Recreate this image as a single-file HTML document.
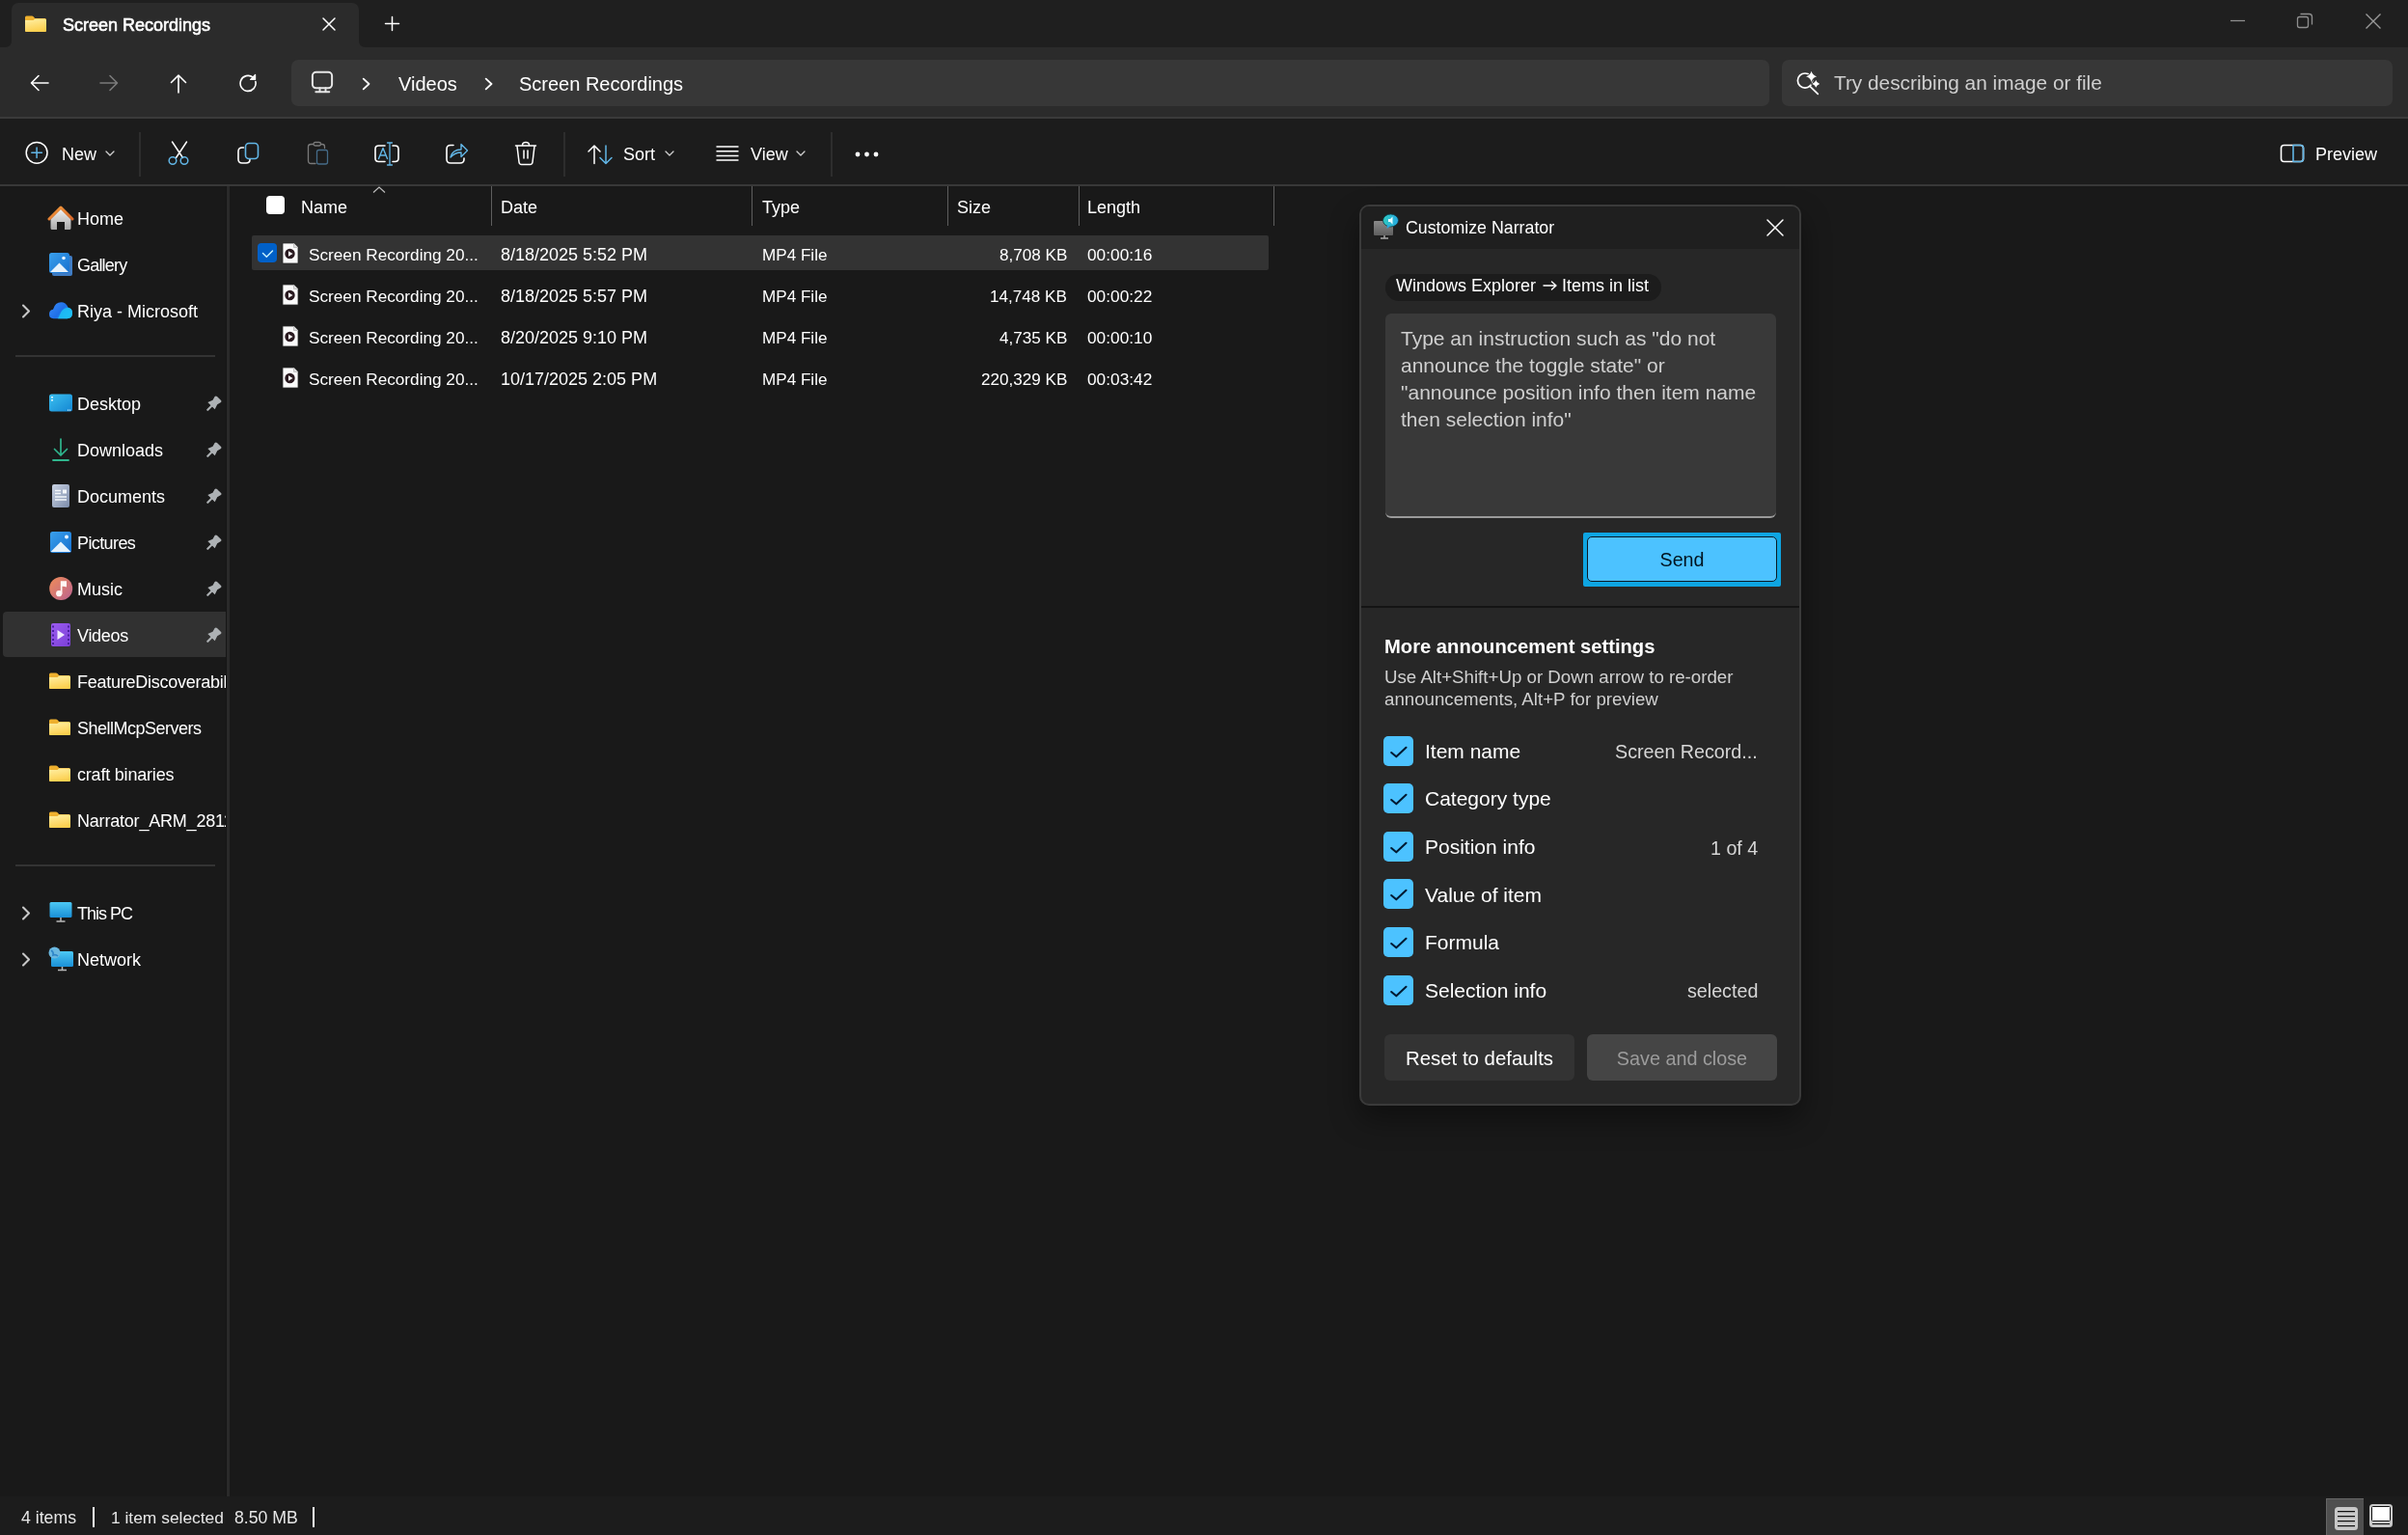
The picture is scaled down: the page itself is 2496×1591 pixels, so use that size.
<!DOCTYPE html>
<html><head><meta charset="utf-8"><title>Screen Recordings - File Explorer</title>
<style>
html,body{margin:0;padding:0;width:2496px;height:1591px;overflow:hidden;background:#191919;}
body{position:relative;font-family:"Liberation Sans",sans-serif;}
.a{position:absolute;display:block;}
.t{position:absolute;white-space:pre;line-height:1;will-change:transform;}
</style></head><body>

<div class="a" style="left:0px;top:0px;width:2496px;height:49px;background:#1f1f1f;"></div>
<div class="a" style="left:0px;top:49px;width:2496px;height:72px;background:#2b2b2b;"></div>
<div class="a" style="left:12px;top:3px;width:360px;height:47px;background:#2b2b2b;border-radius:7px 7px 0 0;"></div>
<svg class="a" style="left:5px;top:42px;" width="7" height="7" viewBox="0 0 7 7"><path d="M0 7 Q7 7 7 0 L7 7 Z" fill="#2b2b2b"/></svg>
<svg class="a" style="left:372px;top:42px;" width="7" height="7" viewBox="0 0 7 7"><path d="M7 7 Q0 7 0 0 L0 7 Z" fill="#2b2b2b"/></svg>
<svg width="0" height="0" style="position:absolute"><defs><linearGradient id="fg" x1="0" y1="0" x2="0.3" y2="1"><stop offset="0" stop-color="#fff0a6"/><stop offset="1" stop-color="#fcd050"/></linearGradient></defs></svg>
<svg class="a" style="left:25px;top:15px;" width="24" height="20" viewBox="0 0 24 20"><path d="M1 3 Q1 1.5 2.5 1.5 L8 1.5 Q9 1.5 9.7 2.3 L11.2 4 L21.5 4 Q23 4 23 5.5 L23 16.5 Q23 18 21.5 18 L2.5 18 Q1 18 1 16.5 Z" fill="#eeb02e"/>
<path d="M1 6 L9.5 6 L11.3 4.6 L21.5 4.6 Q23 4.6 23 6.1 L23 16.5 Q23 18 21.5 18 L2.5 18 Q1 18 1 16.5 Z" fill="url(#fg)"/></svg>
<div class="t" style="left:65px;top:17.26px;font-size:18px;color:#ffffff;font-weight:400;-webkit-text-stroke:0.6px #ffffff;">Screen Recordings</div>
<svg class="a" style="left:333px;top:17px;" width="16" height="16" viewBox="0 0 16 16"><path d="M2 2 L14 14 M14 2 L2 14" stroke="#ffffff" stroke-width="1.5" stroke-linecap="round"/></svg>
<svg class="a" style="left:398px;top:16px;" width="17" height="17" viewBox="0 0 17 17"><path d="M8.5 1.5 V15.5 M1.5 8.5 H15.5" stroke="#ffffff" stroke-width="1.5" stroke-linecap="round"/></svg>
<svg class="a" style="left:2308px;top:14px;" width="24" height="16" viewBox="0 0 24 16"><path d="M4 7.5 H19" stroke="#8f8f8f" stroke-width="1.3"/></svg>
<svg class="a" style="left:2378px;top:11px;" width="22" height="20" viewBox="0 0 22 20"><rect x="3.5" y="6.5" width="11" height="11" rx="2" fill="none" stroke="#8f8f8f" stroke-width="1.3"/><path d="M6.5 3.5 H15.5 Q18.5 3.5 18.5 6.5 V14.5" fill="none" stroke="#8f8f8f" stroke-width="1.3"/></svg>
<svg class="a" style="left:2449px;top:11px;" width="22" height="22" viewBox="0 0 22 22"><path d="M3.5 3.5 L18.5 18.5 M18.5 3.5 L3.5 18.5" stroke="#9a9a9a" stroke-width="1.4"/></svg>
<svg class="a" style="left:30px;top:75px;" width="22" height="22" viewBox="0 0 22 22"><path d="M3 11 H20 M10 3.5 L2.5 11 L10 18.5" stroke="#ffffff" stroke-width="1.6" fill="none" stroke-linecap="round" stroke-linejoin="round"/></svg>
<svg class="a" style="left:102px;top:75px;" width="22" height="22" viewBox="0 0 22 22"><path d="M2 11 H19 M12 3.5 L19.5 11 L12 18.5" stroke="#7b7b7b" stroke-width="1.6" fill="none" stroke-linecap="round" stroke-linejoin="round"/></svg>
<svg class="a" style="left:174px;top:75px;" width="22" height="22" viewBox="0 0 22 22"><path d="M11 21 V3 M3.5 10.5 L11 3 L18.5 10.5" stroke="#ffffff" stroke-width="1.6" fill="none" stroke-linecap="round" stroke-linejoin="round"/></svg>
<svg class="a" style="left:246px;top:75px;" width="22" height="22" viewBox="0 0 22 22"><path d="M18.9 9.6 A8 8 0 1 1 16.2 5.2" stroke="#ffffff" stroke-width="1.6" fill="none" stroke-linecap="round"/><path d="M13.6 7.3 L18.6 7.3 L18.6 2.3 Z" fill="#ffffff" stroke="#ffffff" stroke-width="1.2" stroke-linejoin="round"/></svg>
<div class="a" style="left:302px;top:62px;width:1532px;height:48px;background:#373737;border-radius:7px;"></div>
<svg class="a" style="left:321px;top:72px;" width="26" height="26" viewBox="0 0 26 26"><rect x="2.9" y="2.8" width="20.2" height="16.5" rx="3.8" fill="none" stroke="#e6e6e6" stroke-width="2"/><path d="M10.5 19.3 V23.3 M16.5 19.3 V23.3 M6.3 23.3 H20.3" stroke="#e6e6e6" stroke-width="1.9" stroke-linecap="round"/></svg>
<svg class="a" style="left:372px;top:77px;" width="14" height="20" viewBox="0 0 14 20"><path d="M4.7 4.7 L10.5 10 L4.7 15.3" stroke="#ffffff" stroke-width="1.8" fill="none" stroke-linecap="round" stroke-linejoin="round"/></svg>
<div class="t" style="left:413px;top:77.07px;font-size:20px;color:#ffffff;font-weight:400;">Videos</div>
<svg class="a" style="left:499px;top:77px;" width="14" height="20" viewBox="0 0 14 20"><path d="M4.7 4.7 L10.5 10 L4.7 15.3" stroke="#ffffff" stroke-width="1.8" fill="none" stroke-linecap="round" stroke-linejoin="round"/></svg>
<div class="t" style="left:538px;top:77.07px;font-size:20px;color:#ffffff;font-weight:400;">Screen Recordings</div>
<div class="a" style="left:1847px;top:62px;width:633px;height:48px;background:#373737;border-radius:7px;"></div>
<svg class="a" style="left:1860px;top:73px;" width="28" height="28" viewBox="0 0 28 28"><circle cx="11" cy="10.6" r="7.6" fill="none" stroke="#ffffff" stroke-width="1.7"/><path d="M16 16.3 L24.3 24.3" stroke="#ffffff" stroke-width="1.7" stroke-linecap="round"/><path d="M17.60 0.70 Q18.83 5.07 23.20 6.30 Q18.83 7.53 17.60 11.90 Q16.37 7.53 12.00 6.30 Q16.37 5.07 17.60 0.70 Z" fill="#ffffff" stroke="#373737" stroke-width="1.6" paint-order="stroke"/><path d="M22.30 10.00 Q23.16 13.04 26.20 13.90 Q23.16 14.76 22.30 17.80 Q21.44 14.76 18.40 13.90 Q21.44 13.04 22.30 10.00 Z" fill="#ffffff" stroke="#373737" stroke-width="1.6" paint-order="stroke"/></svg>
<div class="t" style="left:1901px;top:76.39px;font-size:20.8px;color:#cfcfcf;font-weight:400;">Try describing an image or file</div>
<div class="a" style="left:0px;top:121px;width:2496px;height:2px;background:#3a3a3a;"></div>
<div class="a" style="left:0px;top:123px;width:2496px;height:69px;background:#1c1c1c;"></div>
<div class="a" style="left:0px;top:191px;width:2496px;height:2px;background:#383838;"></div>
<svg class="a" style="left:24px;top:144px;" width="28" height="28" viewBox="0 0 28 28"><circle cx="14.1" cy="14.3" r="10.9" stroke="#ffffff" fill="none" stroke-linecap="round" stroke-linejoin="round" stroke-width="1.5"/><path d="M14.1 9 V19.6 M8.8 14.3 H19.4" stroke="#62b6e6" fill="none" stroke-linecap="round" stroke-linejoin="round" stroke-width="1.5"/></svg>
<div class="t" style="left:64px;top:150.76px;font-size:18px;color:#ffffff;font-weight:400;">New</div>
<svg class="a" style="left:107px;top:154px;" width="14" height="10" viewBox="0 0 14 10"><path d="M3 3 L7 7 L11 3" stroke="#d0d0d0" stroke-width="1.3" fill="none" stroke-linecap="round" stroke-linejoin="round"/></svg>
<div class="a" style="left:144px;top:137px;width:2px;height:46px;background:#2d2d2d;"></div>
<svg class="a" style="left:172px;top:144px;" width="28" height="30" viewBox="0 0 28 30"><path d="M6.5 3 L17.5 19.5 M21.5 3 L10.5 19.5" stroke="#ffffff" fill="none" stroke-linecap="round" stroke-linejoin="round" stroke-width="1.5"/><circle cx="7" cy="22.5" r="3.8" stroke="#62b6e6" fill="none" stroke-linecap="round" stroke-linejoin="round" stroke-width="1.5"/><circle cx="19" cy="22.5" r="3.8" stroke="#62b6e6" fill="none" stroke-linecap="round" stroke-linejoin="round" stroke-width="1.5"/></svg>
<svg class="a" style="left:244px;top:144px;" width="28" height="28" viewBox="0 0 28 28"><path d="M8.5 9 H7 Q3 9 3 13 V21 Q3 25 7 25 H11 Q15 25 15 21.5" stroke="#ffffff" fill="none" stroke-linecap="round" stroke-linejoin="round" stroke-width="1.6"/><rect x="10.5" y="4.5" width="13" height="16" rx="3.5" stroke="#62b6e6" fill="none" stroke-linecap="round" stroke-linejoin="round" stroke-width="1.6"/></svg>
<svg class="a" style="left:316px;top:144px;" width="28" height="30" viewBox="0 0 28 30"><path d="M11 25.5 H6.5 Q3.5 25.5 3.5 22.5 V8 Q3.5 5.5 6.5 5.5 H8.5 M17 5.5 H18 Q20.5 5.5 20.5 8 V9.5" stroke="#7a7a7a" stroke-width="1.3" fill="none" stroke-linecap="round"/><rect x="9" y="3.5" width="7.5" height="3.5" rx="1.75" stroke="#7a7a7a" stroke-width="1.3" fill="none"/><rect x="12.5" y="11.5" width="11" height="14.5" rx="2" stroke="#456b88" stroke-width="1.3" fill="none"/></svg>
<svg class="a" style="left:386px;top:144px;" width="30" height="30" viewBox="0 0 30 30"><path d="M13 7 H6.5 Q3 7 3 10.5 V20 Q3 23.5 6.5 23.5 H13 M21 7 H23.5 Q27 7 27 10.5 V20 Q27 23.5 23.5 23.5 H21" stroke="#ffffff" fill="none" stroke-linecap="round" stroke-linejoin="round" stroke-width="1.6"/><path d="M6.5 20.5 L11 9.5 L15.5 20.5 M8 17 H14" stroke="#62b6e6" fill="none" stroke-linecap="round" stroke-linejoin="round" stroke-width="1.4"/><path d="M18 4 V27 M15.5 4 H20.5 M15.5 27 H20.5" stroke="#62b6e6" fill="none" stroke-linecap="round" stroke-linejoin="round" stroke-width="1.3"/></svg>
<svg class="a" style="left:460px;top:144px;" width="28" height="30" viewBox="0 0 28 30"><path d="M10 6.5 H7 Q3 6.5 3 10.5 V21 Q3 25 7 25 H17 Q21 25 21 21 V20" stroke="#ffffff" fill="none" stroke-linecap="round" stroke-linejoin="round" stroke-width="1.6"/><path d="M7 19 Q9 11 18 11 V5.5 L24.5 12 L18 18.5 V14 Q11.5 14 7 19 Z" stroke="#62b6e6" fill="none" stroke-linecap="round" stroke-linejoin="round" stroke-width="1.4"/></svg>
<svg class="a" style="left:531px;top:144px;" width="28" height="30" viewBox="0 0 28 30"><path d="M3.5 7 H24.5 M10.5 6.5 Q10.5 3.5 14 3.5 Q17.5 3.5 17.5 6.5 M5 7.5 L7 24 Q7.3 26.5 9.5 26.5 H18.5 Q20.7 26.5 21 24 L23 7.5 M12 12 V20 M16 12 V20" stroke="#ffffff" fill="none" stroke-linecap="round" stroke-linejoin="round" stroke-width="1.5"/></svg>
<div class="a" style="left:584px;top:137px;width:2px;height:46px;background:#2d2d2d;"></div>
<svg class="a" style="left:607px;top:148px;" width="30" height="24" viewBox="0 0 30 24"><path d="M9 21.5 V3 M3 9 L9 3 L15 9" stroke="#ffffff" fill="none" stroke-linecap="round" stroke-linejoin="round" stroke-width="1.5"/><path d="M21 3 V21.5 M15 15.5 L21 21.5 L27 15.5" stroke="#62b6e6" fill="none" stroke-linecap="round" stroke-linejoin="round" stroke-width="1.5"/></svg>
<div class="t" style="left:646px;top:150.76px;font-size:18px;color:#ffffff;font-weight:400;">Sort</div>
<svg class="a" style="left:687px;top:154px;" width="14" height="10" viewBox="0 0 14 10"><path d="M3 3 L7 7 L11 3" stroke="#d0d0d0" stroke-width="1.3" fill="none" stroke-linecap="round" stroke-linejoin="round"/></svg>
<svg class="a" style="left:740px;top:148px;" width="28" height="22" viewBox="0 0 28 22"><path d="M2.5 4 H25.5 M2.5 8.7 H25.5 M2.5 13.4 H25.5 M2.5 18 H25.5" stroke="#ffffff" stroke-width="1.5"/></svg>
<div class="t" style="left:778px;top:150.76px;font-size:18px;color:#ffffff;font-weight:400;">View</div>
<svg class="a" style="left:823px;top:154px;" width="14" height="10" viewBox="0 0 14 10"><path d="M3 3 L7 7 L11 3" stroke="#d0d0d0" stroke-width="1.3" fill="none" stroke-linecap="round" stroke-linejoin="round"/></svg>
<div class="a" style="left:861px;top:137px;width:2px;height:46px;background:#2d2d2d;"></div>
<svg class="a" style="left:884px;top:153px;" width="30" height="14" viewBox="0 0 30 14"><circle cx="5" cy="7" r="2.4" fill="#fff"/><circle cx="14.5" cy="7" r="2.4" fill="#fff"/><circle cx="24" cy="7" r="2.4" fill="#fff"/></svg>
<svg class="a" style="left:2361px;top:147px;" width="30" height="24" viewBox="0 0 30 24"><rect x="3.5" y="3.5" width="23" height="17" rx="3" stroke="#ffffff" fill="none" stroke-linecap="round" stroke-linejoin="round" stroke-width="1.6"/><path d="M16 3.8 V20.2" stroke="#62b6e6" fill="none" stroke-linecap="round" stroke-linejoin="round" stroke-width="1.6"/><path d="M16.5 3.5 H23.5 Q26.5 3.5 26.5 6.5 V17.5 Q26.5 20.5 23.5 20.5 H16.5" stroke="#62b6e6" fill="none" stroke-linecap="round" stroke-linejoin="round" stroke-width="1.6"/></svg>
<div class="t" style="left:2400px;top:150.76px;font-size:18px;color:#ffffff;font-weight:400;">Preview</div>
<div class="a" style="left:234px;top:193px;width:1px;height:1358px;background:#151515;"></div>
<div class="a" style="left:235px;top:193px;width:3px;height:1358px;background:#2a2a2a;"></div>
<div class="a" style="left:3px;top:634px;width:231px;height:47px;background:#313131;border-radius:4px 0 0 4px;"></div>
<div class="a" style="left:16px;top:368px;width:207px;height:2px;background:#333333;"></div>
<div class="a" style="left:16px;top:896px;width:207px;height:2px;background:#333333;"></div>
<svg width="0" height="0" style="position:absolute"><defs>
<linearGradient id="hm" x1="0" y1="0" x2="0" y2="1"><stop offset="0" stop-color="#f2f2f2"/><stop offset="1" stop-color="#a9a9a9"/></linearGradient>
<linearGradient id="rf" x1="0" y1="0" x2="1" y2="1"><stop offset="0" stop-color="#f29a3c"/><stop offset="1" stop-color="#d8682a"/></linearGradient>
<linearGradient id="gb" x1="0" y1="0" x2="1" y2="1"><stop offset="0" stop-color="#3aa0ec"/><stop offset="1" stop-color="#1670cf"/></linearGradient>
<linearGradient id="od" x1="0" y1="0" x2="1" y2="0.6"><stop offset="0" stop-color="#3a8cf8"/><stop offset="0.6" stop-color="#1f6fe8"/><stop offset="1" stop-color="#2aa8f4"/></linearGradient>
<linearGradient id="dk" x1="0" y1="0" x2="1" y2="1"><stop offset="0" stop-color="#3cc0f0"/><stop offset="1" stop-color="#1486d2"/></linearGradient>
<linearGradient id="dc" x1="0" y1="0" x2="1" y2="1"><stop offset="0" stop-color="#c9d2e2"/><stop offset="1" stop-color="#7c8cab"/></linearGradient>
<linearGradient id="mu" x1="0" y1="0" x2="1" y2="1"><stop offset="0" stop-color="#ef8c58"/><stop offset="1" stop-color="#bb6390"/></linearGradient>
<linearGradient id="vd" x1="0" y1="0" x2="1" y2="1"><stop offset="0" stop-color="#9c5cf0"/><stop offset="1" stop-color="#7a3fd6"/></linearGradient>
<linearGradient id="pc" x1="0" y1="0" x2="0" y2="1"><stop offset="0" stop-color="#4cc8f4"/><stop offset="1" stop-color="#1a8fd6"/></linearGradient>
</defs></svg>
<svg class="a" style="left:49px;top:212px;" width="28" height="28" viewBox="0 0 28 28"><path d="M3.5 15 L14 4.5 L24.5 15 L24.5 24.5 Q24.5 26 23 26 L18 26 L18 18 L10 18 L10 26 L5 26 Q3.5 26 3.5 24.5 Z" fill="url(#hm)"/><path d="M2 15 L14 3 L26 15" stroke="url(#rf)" stroke-width="3" fill="none" stroke-linejoin="round" stroke-linecap="round"/></svg>
<div class="t" style="left:80px;top:217.76px;font-size:18px;color:#ffffff;font-weight:400;">Home</div>
<svg class="a" style="left:49px;top:260px;" width="28" height="28" viewBox="0 0 28 28"><rect x="5" y="5" width="21" height="21" rx="2" fill="#3f7cc4"/><rect x="2" y="2" width="21" height="21" rx="2.5" fill="url(#gb)"/><path d="M3 22 L12.5 12.5 L22 22 Z" fill="#e6f2fc"/><circle cx="17" cy="7.5" r="1.8" fill="#e6f2fc"/></svg>
<div class="t" style="left:80px;top:265.76px;font-size:18px;color:#ffffff;font-weight:400;letter-spacing:-0.8px;">Gallery</div>
<svg class="a" style="left:20px;top:314px;" width="14" height="18" viewBox="0 0 14 18"><path d="M4 2.5 L10 8.5 L4 14.5" stroke="#c8c8c8" stroke-width="2.1" fill="none" stroke-linecap="round" stroke-linejoin="round"/></svg>
<svg class="a" style="left:49px;top:309px;" width="28" height="24" viewBox="0 0 28 24"><path d="M6.5 21.2 Q2 21.2 2 16.6 Q2 12.4 6 11.7 Q8.2 4.3 14.4 4.3 Q19.2 4.3 21.6 9.7 Q26 10.4 26 15.6 Q26 21.2 20.6 21.2 Z" fill="url(#od)"/><path d="M21.6 9.7 Q17 10 14.5 14 L11 21.2 L20.6 21.2 Q26 21.2 26 15.6 Q26 10.4 21.6 9.7 Z" fill="#1cc2f6" opacity="0.85"/></svg>
<div class="t" style="left:80px;top:313.76px;font-size:18px;color:#ffffff;font-weight:400;">Riya - Microsoft</div>
<svg class="a" style="left:49px;top:405px;" width="28" height="26" viewBox="0 0 28 26"><rect x="2" y="3.5" width="24" height="18" rx="2.5" fill="url(#dk)"/><rect x="4" y="6" width="2" height="1.6" fill="#d8f2fc"/><rect x="4" y="9" width="2" height="1.6" fill="#d8f2fc"/><rect x="21" y="19.5" width="1.2" height="1.2" fill="#d8f2fc"/><rect x="23" y="19.5" width="1.2" height="1.2" fill="#d8f2fc"/></svg>
<div class="t" style="left:80px;top:409.76px;font-size:18px;color:#ffffff;font-weight:400;">Desktop</div>
<svg class="a" style="left:214px;top:410.4px;" width="18" height="18" viewBox="0 0 18 18"><path d="M8.6 0.9 Q9.9 0 11 1 L15.1 5.1 Q16 6.1 15 6.9 L11.2 9.3 L8.7 14.3 L1.3 6.9 L6.5 4.8 Z" fill="#adb1b4"/><path d="M5.8 10.3 L1.3 14.8" stroke="#adb1b4" stroke-width="2.1" stroke-linecap="round"/></svg>
<svg class="a" style="left:49px;top:452px;" width="28" height="28" viewBox="0 0 28 28"><path d="M14 3 V20 M7.5 13.5 L14 20 L20.5 13.5" stroke="#2fb58d" stroke-width="1.7" fill="none" stroke-linecap="round" stroke-linejoin="round"/><path d="M6 25 H22" stroke="#2fb58d" stroke-width="1.8" stroke-linecap="round"/></svg>
<div class="t" style="left:80px;top:457.76px;font-size:18px;color:#ffffff;font-weight:400;">Downloads</div>
<svg class="a" style="left:214px;top:458.4px;" width="18" height="18" viewBox="0 0 18 18"><path d="M8.6 0.9 Q9.9 0 11 1 L15.1 5.1 Q16 6.1 15 6.9 L11.2 9.3 L8.7 14.3 L1.3 6.9 L6.5 4.8 Z" fill="#adb1b4"/><path d="M5.8 10.3 L1.3 14.8" stroke="#adb1b4" stroke-width="2.1" stroke-linecap="round"/></svg>
<svg class="a" style="left:49px;top:500px;" width="28" height="28" viewBox="0 0 28 28"><rect x="5" y="2" width="18" height="24" rx="2" fill="url(#dc)"/><path d="M8 8.5 H14 M8 11.5 H14 M8 15 H20 M8 18 H20" stroke="#f4f7fb" stroke-width="1.3"/><rect x="16" y="7.5" width="4" height="4" fill="#f4f7fb"/></svg>
<div class="t" style="left:80px;top:505.76px;font-size:18px;color:#ffffff;font-weight:400;">Documents</div>
<svg class="a" style="left:214px;top:506.4px;" width="18" height="18" viewBox="0 0 18 18"><path d="M8.6 0.9 Q9.9 0 11 1 L15.1 5.1 Q16 6.1 15 6.9 L11.2 9.3 L8.7 14.3 L1.3 6.9 L6.5 4.8 Z" fill="#adb1b4"/><path d="M5.8 10.3 L1.3 14.8" stroke="#adb1b4" stroke-width="2.1" stroke-linecap="round"/></svg>
<svg class="a" style="left:49px;top:548px;" width="28" height="28" viewBox="0 0 28 28"><rect x="3" y="3" width="22" height="22" rx="2.5" fill="url(#gb)"/><path d="M3.5 24 L14 13.5 L24.5 24 Z" fill="#e6f2fc"/><circle cx="20" cy="8.5" r="2" fill="#e6f2fc"/></svg>
<div class="t" style="left:80px;top:553.76px;font-size:18px;color:#ffffff;font-weight:400;letter-spacing:-0.6px;">Pictures</div>
<svg class="a" style="left:214px;top:554.4px;" width="18" height="18" viewBox="0 0 18 18"><path d="M8.6 0.9 Q9.9 0 11 1 L15.1 5.1 Q16 6.1 15 6.9 L11.2 9.3 L8.7 14.3 L1.3 6.9 L6.5 4.8 Z" fill="#adb1b4"/><path d="M5.8 10.3 L1.3 14.8" stroke="#adb1b4" stroke-width="2.1" stroke-linecap="round"/></svg>
<svg class="a" style="left:49px;top:596px;" width="28" height="28" viewBox="0 0 28 28"><circle cx="14.2" cy="13.9" r="12" fill="url(#mu)"/><path d="M13.8 19.5 V6.2 H20 V12.5 Q17.5 11.6 15.5 11.8 V19.5 Z" fill="#fff6f4"/><circle cx="12.2" cy="19.2" r="3.1" fill="#fff6f4"/></svg>
<div class="t" style="left:80px;top:601.76px;font-size:18px;color:#ffffff;font-weight:400;">Music</div>
<svg class="a" style="left:214px;top:602.4px;" width="18" height="18" viewBox="0 0 18 18"><path d="M8.6 0.9 Q9.9 0 11 1 L15.1 5.1 Q16 6.1 15 6.9 L11.2 9.3 L8.7 14.3 L1.3 6.9 L6.5 4.8 Z" fill="#adb1b4"/><path d="M5.8 10.3 L1.3 14.8" stroke="#adb1b4" stroke-width="2.1" stroke-linecap="round"/></svg>
<svg class="a" style="left:49px;top:644px;" width="28" height="28" viewBox="0 0 28 28"><rect x="4" y="2" width="20" height="24" rx="2" fill="url(#vd)"/><g fill="#4a1fa0"><rect x="5" y="4.5" width="2" height="2"/><rect x="5" y="9" width="2" height="2"/><rect x="5" y="13.5" width="2" height="2"/><rect x="5" y="18" width="2" height="2"/><rect x="5" y="22" width="2" height="2"/><rect x="21" y="4.5" width="2" height="2"/><rect x="21" y="9" width="2" height="2"/><rect x="21" y="13.5" width="2" height="2"/><rect x="21" y="18" width="2" height="2"/><rect x="21" y="22" width="2" height="2"/></g><path d="M10.5 9 L18 14 L10.5 19 Z" fill="#f0e8ff"/></svg>
<div class="t" style="left:80px;top:649.76px;font-size:18px;color:#ffffff;font-weight:400;letter-spacing:-0.3px;">Videos</div>
<svg class="a" style="left:214px;top:650.4px;" width="18" height="18" viewBox="0 0 18 18"><path d="M8.6 0.9 Q9.9 0 11 1 L15.1 5.1 Q16 6.1 15 6.9 L11.2 9.3 L8.7 14.3 L1.3 6.9 L6.5 4.8 Z" fill="#adb1b4"/><path d="M5.8 10.3 L1.3 14.8" stroke="#adb1b4" stroke-width="2.1" stroke-linecap="round"/></svg>
<svg class="a" style="left:50px;top:695.5px;" width="24" height="20" viewBox="0 0 24 20"><path d="M1 3 Q1 1.5 2.5 1.5 L8 1.5 Q9 1.5 9.7 2.3 L11.2 4 L21.5 4 Q23 4 23 5.5 L23 16.5 Q23 18 21.5 18 L2.5 18 Q1 18 1 16.5 Z" fill="#eeb02e"/>
<path d="M1 6 L9.5 6 L11.3 4.6 L21.5 4.6 Q23 4.6 23 6.1 L23 16.5 Q23 18 21.5 18 L2.5 18 Q1 18 1 16.5 Z" fill="url(#fg)"/></svg>
<div class="t" style="left:80px;top:697.76px;font-size:18px;color:#ffffff;font-weight:400;width:154px;overflow:hidden;padding-bottom:8px;letter-spacing:-0.25px;">FeatureDiscoverabil</div>
<svg class="a" style="left:50px;top:743.5px;" width="24" height="20" viewBox="0 0 24 20"><path d="M1 3 Q1 1.5 2.5 1.5 L8 1.5 Q9 1.5 9.7 2.3 L11.2 4 L21.5 4 Q23 4 23 5.5 L23 16.5 Q23 18 21.5 18 L2.5 18 Q1 18 1 16.5 Z" fill="#eeb02e"/>
<path d="M1 6 L9.5 6 L11.3 4.6 L21.5 4.6 Q23 4.6 23 6.1 L23 16.5 Q23 18 21.5 18 L2.5 18 Q1 18 1 16.5 Z" fill="url(#fg)"/></svg>
<div class="t" style="left:80px;top:745.76px;font-size:18px;color:#ffffff;font-weight:400;width:154px;overflow:hidden;padding-bottom:8px;letter-spacing:-0.5px;">ShellMcpServers</div>
<svg class="a" style="left:50px;top:791.5px;" width="24" height="20" viewBox="0 0 24 20"><path d="M1 3 Q1 1.5 2.5 1.5 L8 1.5 Q9 1.5 9.7 2.3 L11.2 4 L21.5 4 Q23 4 23 5.5 L23 16.5 Q23 18 21.5 18 L2.5 18 Q1 18 1 16.5 Z" fill="#eeb02e"/>
<path d="M1 6 L9.5 6 L11.3 4.6 L21.5 4.6 Q23 4.6 23 6.1 L23 16.5 Q23 18 21.5 18 L2.5 18 Q1 18 1 16.5 Z" fill="url(#fg)"/></svg>
<div class="t" style="left:80px;top:793.76px;font-size:18px;color:#ffffff;font-weight:400;width:154px;overflow:hidden;padding-bottom:8px;letter-spacing:-0.2px;">craft binaries</div>
<svg class="a" style="left:50px;top:839.5px;" width="24" height="20" viewBox="0 0 24 20"><path d="M1 3 Q1 1.5 2.5 1.5 L8 1.5 Q9 1.5 9.7 2.3 L11.2 4 L21.5 4 Q23 4 23 5.5 L23 16.5 Q23 18 21.5 18 L2.5 18 Q1 18 1 16.5 Z" fill="#eeb02e"/>
<path d="M1 6 L9.5 6 L11.3 4.6 L21.5 4.6 Q23 4.6 23 6.1 L23 16.5 Q23 18 21.5 18 L2.5 18 Q1 18 1 16.5 Z" fill="url(#fg)"/></svg>
<div class="t" style="left:80px;top:841.76px;font-size:18px;color:#ffffff;font-weight:400;width:154px;overflow:hidden;padding-bottom:8px;letter-spacing:-0.2px;">Narrator_ARM_2811</div>
<svg class="a" style="left:20px;top:938px;" width="14" height="18" viewBox="0 0 14 18"><path d="M4 2.5 L10 8.5 L4 14.5" stroke="#c8c8c8" stroke-width="2.1" fill="none" stroke-linecap="round" stroke-linejoin="round"/></svg>
<svg class="a" style="left:49px;top:932px;" width="28" height="26" viewBox="0 0 28 26"><rect x="2.5" y="3" width="23" height="16" rx="1.5" fill="url(#pc)"/><path d="M14 19 V22.5 M9.5 23 H18.5" stroke="#b8b8b8" stroke-width="1.5"/></svg>
<div class="t" style="left:80px;top:937.76px;font-size:18px;color:#ffffff;font-weight:400;letter-spacing:-1px;">This PC</div>
<svg class="a" style="left:20px;top:986px;" width="14" height="18" viewBox="0 0 14 18"><path d="M4 2.5 L10 8.5 L4 14.5" stroke="#c8c8c8" stroke-width="2.1" fill="none" stroke-linecap="round" stroke-linejoin="round"/></svg>
<svg class="a" style="left:49px;top:980px;" width="28" height="28" viewBox="0 0 28 28"><rect x="4" y="6" width="23" height="16" rx="1.5" fill="url(#pc)"/><path d="M15.5 22 V25 M11 25.5 H20" stroke="#b8b8b8" stroke-width="1.5"/><circle cx="7.5" cy="7.5" r="6" fill="#6ab8e0"/><path d="M4 5 Q7 7 6 10 Q9 9 11 11" stroke="#2f86c8" stroke-width="1.6" fill="none"/></svg>
<div class="t" style="left:80px;top:985.76px;font-size:18px;color:#ffffff;font-weight:400;">Network</div>
<div class="a" style="left:276px;top:203px;width:19px;height:19px;background:#ffffff;border-radius:4px;"></div>
<svg class="a" style="left:385px;top:192px;" width="16" height="10" viewBox="0 0 16 10"><path d="M2 7.5 L8 2 L14 7.5" stroke="#bdbdbd" stroke-width="1.2" fill="none"/></svg>
<div class="t" style="left:312px;top:205.76px;font-size:18px;color:#ffffff;font-weight:400;">Name</div>
<div class="a" style="left:509px;top:193px;width:1px;height:41px;background:#5e5e5e;"></div>
<div class="a" style="left:779px;top:193px;width:1px;height:41px;background:#5e5e5e;"></div>
<div class="a" style="left:982px;top:193px;width:1px;height:41px;background:#5e5e5e;"></div>
<div class="a" style="left:1118px;top:193px;width:1px;height:41px;background:#5e5e5e;"></div>
<div class="a" style="left:1320px;top:193px;width:1px;height:41px;background:#5e5e5e;"></div>
<div class="t" style="left:519px;top:205.76px;font-size:18px;color:#ffffff;font-weight:400;">Date</div>
<div class="t" style="left:790px;top:205.76px;font-size:18px;color:#ffffff;font-weight:400;">Type</div>
<div class="t" style="left:992px;top:205.76px;font-size:18px;color:#ffffff;font-weight:400;">Size</div>
<div class="t" style="left:1127px;top:205.76px;font-size:18px;color:#ffffff;font-weight:400;">Length</div>
<div class="a" style="left:261px;top:244px;width:1054px;height:36px;background:#333333;border-radius:2px;"></div>
<div class="a" style="left:267px;top:252px;width:20px;height:20px;background:#0060c8;border-radius:4px;"></div>
<svg class="a" style="left:267px;top:252px;" width="20" height="20" viewBox="0 0 20 20"><path d="M5.5 10.5 L9.3 14.2 L15.5 8" stroke="#c8f4ff" stroke-width="1.4" fill="none" stroke-linecap="round" stroke-linejoin="round"/></svg>
<svg class="a" style="left:292px;top:250.5px;" width="19" height="24" viewBox="0 0 19 24"><path d="M1 1 H12.5 L17 5.5 V22 H1 Z" fill="#fafafa" stroke="#2a2a2a" stroke-width="0.8"/><path d="M12.5 1 V5.5 H17" fill="#e0e0e0" stroke="#b8b8b8" stroke-width="0.8"/><circle cx="8.5" cy="12" r="5.2" fill="#2a1a20"/><path d="M7 9.2 L11.5 12 L7 14.8 Z" fill="#ffffff"/></svg>
<div class="t" style="left:320px;top:255.94px;font-size:17.2px;color:#ffffff;font-weight:400;">Screen Recording 20...</div>
<div class="t" style="left:519px;top:255.26px;font-size:18px;color:#ffffff;font-weight:400;">8/18/2025 5:52 PM</div>
<div class="t" style="left:790px;top:256.02px;font-size:17.1px;color:#ffffff;font-weight:400;">MP4 File</div>
<div class="t" style="right:1390px;top:256.02px;font-size:17.1px;color:#ffffff;font-weight:400;">8,708 KB</div>
<div class="t" style="left:1127px;top:255.85px;font-size:17.3px;color:#ffffff;font-weight:400;">00:00:16</div>
<svg class="a" style="left:292px;top:293.5px;" width="19" height="24" viewBox="0 0 19 24"><path d="M1 1 H12.5 L17 5.5 V22 H1 Z" fill="#fafafa" stroke="#2a2a2a" stroke-width="0.8"/><path d="M12.5 1 V5.5 H17" fill="#e0e0e0" stroke="#b8b8b8" stroke-width="0.8"/><circle cx="8.5" cy="12" r="5.2" fill="#2a1a20"/><path d="M7 9.2 L11.5 12 L7 14.8 Z" fill="#ffffff"/></svg>
<div class="t" style="left:320px;top:298.94px;font-size:17.2px;color:#ffffff;font-weight:400;">Screen Recording 20...</div>
<div class="t" style="left:519px;top:298.26px;font-size:18px;color:#ffffff;font-weight:400;">8/18/2025 5:57 PM</div>
<div class="t" style="left:790px;top:299.02px;font-size:17.1px;color:#ffffff;font-weight:400;">MP4 File</div>
<div class="t" style="right:1390px;top:299.02px;font-size:17.1px;color:#ffffff;font-weight:400;">14,748 KB</div>
<div class="t" style="left:1127px;top:298.85px;font-size:17.3px;color:#ffffff;font-weight:400;">00:00:22</div>
<svg class="a" style="left:292px;top:336.5px;" width="19" height="24" viewBox="0 0 19 24"><path d="M1 1 H12.5 L17 5.5 V22 H1 Z" fill="#fafafa" stroke="#2a2a2a" stroke-width="0.8"/><path d="M12.5 1 V5.5 H17" fill="#e0e0e0" stroke="#b8b8b8" stroke-width="0.8"/><circle cx="8.5" cy="12" r="5.2" fill="#2a1a20"/><path d="M7 9.2 L11.5 12 L7 14.8 Z" fill="#ffffff"/></svg>
<div class="t" style="left:320px;top:341.94px;font-size:17.2px;color:#ffffff;font-weight:400;">Screen Recording 20...</div>
<div class="t" style="left:519px;top:341.26px;font-size:18px;color:#ffffff;font-weight:400;">8/20/2025 9:10 PM</div>
<div class="t" style="left:790px;top:342.02px;font-size:17.1px;color:#ffffff;font-weight:400;">MP4 File</div>
<div class="t" style="right:1390px;top:342.02px;font-size:17.1px;color:#ffffff;font-weight:400;">4,735 KB</div>
<div class="t" style="left:1127px;top:341.85px;font-size:17.3px;color:#ffffff;font-weight:400;">00:00:10</div>
<svg class="a" style="left:292px;top:379.5px;" width="19" height="24" viewBox="0 0 19 24"><path d="M1 1 H12.5 L17 5.5 V22 H1 Z" fill="#fafafa" stroke="#2a2a2a" stroke-width="0.8"/><path d="M12.5 1 V5.5 H17" fill="#e0e0e0" stroke="#b8b8b8" stroke-width="0.8"/><circle cx="8.5" cy="12" r="5.2" fill="#2a1a20"/><path d="M7 9.2 L11.5 12 L7 14.8 Z" fill="#ffffff"/></svg>
<div class="t" style="left:320px;top:384.94px;font-size:17.2px;color:#ffffff;font-weight:400;">Screen Recording 20...</div>
<div class="t" style="left:519px;top:384.26px;font-size:18px;color:#ffffff;font-weight:400;">10/17/2025 2:05 PM</div>
<div class="t" style="left:790px;top:385.02px;font-size:17.1px;color:#ffffff;font-weight:400;">MP4 File</div>
<div class="t" style="right:1390px;top:385.02px;font-size:17.1px;color:#ffffff;font-weight:400;">220,329 KB</div>
<div class="t" style="left:1127px;top:384.85px;font-size:17.3px;color:#ffffff;font-weight:400;">00:03:42</div>
<div class="a" style="left:1409px;top:212px;width:458px;height:934px;background:#272727;border:2px solid #3a3a3a;border-radius:10px;box-sizing:border-box;overflow:hidden;box-shadow:0 14px 30px rgba(0,0,0,0.4);"><div style="position:absolute;left:0;top:0;width:100%;height:44px;background:#1f1f1f;"></div></div>
<svg width="0" height="0" style="position:absolute"><defs>
<linearGradient id="mon" x1="0" y1="0" x2="0" y2="1"><stop offset="0" stop-color="#8a8a8a"/><stop offset="1" stop-color="#5e5e5e"/></linearGradient>
<linearGradient id="bub" x1="0" y1="0" x2="1" y2="0"><stop offset="0" stop-color="#2ec9c0"/><stop offset="1" stop-color="#27a8e0"/></linearGradient>
</defs></svg>
<svg class="a" style="left:1422px;top:220px;" width="30" height="30" viewBox="0 0 30 30"><rect x="2" y="9" width="20" height="15" rx="1" fill="url(#mon)"/><path d="M9 27 H17 M13 24 V27" stroke="#a8a8a8" stroke-width="1.5"/><ellipse cx="19.5" cy="8.5" rx="8" ry="6.5" fill="url(#bub)" stroke="#0d3b46" stroke-width="0.8"/><path d="M16 13 L15.5 17 L19.5 14 Z" fill="#27a8e0"/><path d="M17 7 H19 L21.5 4.5 V12.5 L19 10 H17 Z" fill="#e8fbff"/></svg>
<div class="t" style="left:1457px;top:227.93px;font-size:17.8px;color:#ffffff;font-weight:400;">Customize Narrator</div>
<svg class="a" style="left:1829px;top:225px;" width="22" height="22" viewBox="0 0 22 22"><path d="M3 3 L19 19 M19 3 L3 19" stroke="#ffffff" stroke-width="1.5" stroke-linecap="round"/></svg>
<div class="a" style="left:1436px;top:284px;width:286px;height:28px;background:#1c1c1c;border-radius:14px;"></div>
<div class="t" style="left:1447px;top:287.26px;font-size:18px;color:#ffffff;font-weight:400;">Windows Explorer</div>
<svg class="a" style="left:1598px;top:289px;" width="18" height="14" viewBox="0 0 18 14"><path d="M2 7 H15 M10.5 3 L15 7 L10.5 11" stroke="#ffffff" stroke-width="1.4" fill="none" stroke-linecap="round" stroke-linejoin="round"/></svg>
<div class="t" style="left:1619px;top:287.26px;font-size:18px;color:#ffffff;font-weight:400;">Items in list</div>
<div class="a" style="left:1436px;top:325px;width:405px;height:212px;background:#393939;border-radius:6px;box-sizing:border-box;border-bottom:2px solid #9a9a9a;"></div>
<div class="t" style="left:1452px;top:339.82px;font-size:21px;color:#cfcfcf;font-weight:400;">Type an instruction such as "do not</div>
<div class="t" style="left:1452px;top:368.02px;font-size:21px;color:#cfcfcf;font-weight:400;">announce the toggle state" or</div>
<div class="t" style="left:1452px;top:396.22px;font-size:21px;color:#cfcfcf;font-weight:400;">"announce position info then item name</div>
<div class="t" style="left:1452px;top:424.42px;font-size:21px;color:#cfcfcf;font-weight:400;">then selection info"</div>
<div class="a" style="left:1641px;top:552px;width:205px;height:56px;background:#0ea5e2;border-radius:2px;"></div>
<div class="a" style="left:1645px;top:556px;width:197px;height:47px;background:#4cc2ff;border-radius:5px;box-sizing:border-box;border:1px solid #0a1a24;"></div>
<div class="t" style="left:1645.0px;width:197px;text-align:center;top:571.32px;font-size:19.7px;color:#00131f;font-weight:400;">Send</div>
<div class="a" style="left:1411px;top:628px;width:454px;height:2px;background:#141414;"></div>
<div class="t" style="left:1435px;top:659.90px;font-size:20.2px;color:#ffffff;font-weight:700;">More announcement settings</div>
<div class="t" style="left:1435px;top:693.17px;font-size:18.7px;color:#d0d0d0;font-weight:400;">Use Alt+Shift+Up or Down arrow to re-order</div>
<div class="t" style="left:1435px;top:716.17px;font-size:18.7px;color:#d0d0d0;font-weight:400;">announcements, Alt+P for preview</div>
<div class="a" style="left:1434px;top:762.5px;width:31px;height:31px;background:#4cc2ff;border-radius:5px;"></div>
<svg class="a" style="left:1434px;top:762.5px;" width="31" height="31" viewBox="0 0 31 31"><path d="M8.2 17 L13.3 21.3 L23.5 11.8" stroke="#001a33" stroke-width="2.1" fill="none" stroke-linecap="round" stroke-linejoin="round"/></svg>
<div class="t" style="left:1477px;top:767.72px;font-size:21px;color:#ffffff;font-weight:400;">Item name</div>
<div class="t" style="right:674px;top:770.32px;font-size:19.7px;color:#d6d6d6;font-weight:400;">Screen Record...</div>
<div class="a" style="left:1434px;top:812.1px;width:31px;height:31px;background:#4cc2ff;border-radius:5px;"></div>
<svg class="a" style="left:1434px;top:812.1px;" width="31" height="31" viewBox="0 0 31 31"><path d="M8.2 17 L13.3 21.3 L23.5 11.8" stroke="#001a33" stroke-width="2.1" fill="none" stroke-linecap="round" stroke-linejoin="round"/></svg>
<div class="t" style="left:1477px;top:817.32px;font-size:21px;color:#ffffff;font-weight:400;">Category type</div>
<div class="a" style="left:1434px;top:861.7px;width:31px;height:31px;background:#4cc2ff;border-radius:5px;"></div>
<svg class="a" style="left:1434px;top:861.7px;" width="31" height="31" viewBox="0 0 31 31"><path d="M8.2 17 L13.3 21.3 L23.5 11.8" stroke="#001a33" stroke-width="2.1" fill="none" stroke-linecap="round" stroke-linejoin="round"/></svg>
<div class="t" style="left:1477px;top:866.92px;font-size:21px;color:#ffffff;font-weight:400;">Position info</div>
<div class="t" style="right:674px;top:869.52px;font-size:19.7px;color:#d6d6d6;font-weight:400;">1 of 4</div>
<div class="a" style="left:1434px;top:911.3px;width:31px;height:31px;background:#4cc2ff;border-radius:5px;"></div>
<svg class="a" style="left:1434px;top:911.3px;" width="31" height="31" viewBox="0 0 31 31"><path d="M8.2 17 L13.3 21.3 L23.5 11.8" stroke="#001a33" stroke-width="2.1" fill="none" stroke-linecap="round" stroke-linejoin="round"/></svg>
<div class="t" style="left:1477px;top:916.52px;font-size:21px;color:#ffffff;font-weight:400;">Value of item</div>
<div class="a" style="left:1434px;top:960.9px;width:31px;height:31px;background:#4cc2ff;border-radius:5px;"></div>
<svg class="a" style="left:1434px;top:960.9px;" width="31" height="31" viewBox="0 0 31 31"><path d="M8.2 17 L13.3 21.3 L23.5 11.8" stroke="#001a33" stroke-width="2.1" fill="none" stroke-linecap="round" stroke-linejoin="round"/></svg>
<div class="t" style="left:1477px;top:966.12px;font-size:21px;color:#ffffff;font-weight:400;">Formula</div>
<div class="a" style="left:1434px;top:1010.5px;width:31px;height:31px;background:#4cc2ff;border-radius:5px;"></div>
<svg class="a" style="left:1434px;top:1010.5px;" width="31" height="31" viewBox="0 0 31 31"><path d="M8.2 17 L13.3 21.3 L23.5 11.8" stroke="#001a33" stroke-width="2.1" fill="none" stroke-linecap="round" stroke-linejoin="round"/></svg>
<div class="t" style="left:1477px;top:1015.72px;font-size:21px;color:#ffffff;font-weight:400;">Selection info</div>
<div class="t" style="right:674px;top:1018.32px;font-size:19.7px;color:#d6d6d6;font-weight:400;">selected</div>
<div class="a" style="left:1435px;top:1072px;width:197px;height:48px;background:#333333;border-radius:6px;"></div>
<div class="t" style="left:1435.0px;width:197px;text-align:center;top:1087.23px;font-size:20.4px;color:#ffffff;font-weight:400;">Reset to defaults</div>
<div class="a" style="left:1645px;top:1072px;width:197px;height:48px;background:#454545;border-radius:6px;"></div>
<div class="t" style="left:1645.0px;width:197px;text-align:center;top:1087.74px;font-size:19.8px;color:#9c9c9c;font-weight:400;">Save and close</div>
<div class="a" style="left:0px;top:1551px;width:2496px;height:40px;background:#1c1c1c;"></div>
<div class="t" style="left:22px;top:1564.51px;font-size:17.7px;color:#e6e6e6;font-weight:400;">4 items</div>
<div class="a" style="left:96px;top:1562px;width:2px;height:21px;background:#ffffff;"></div>
<div class="t" style="left:115px;top:1564.77px;font-size:17.4px;color:#e6e6e6;font-weight:400;">1 item selected</div>
<div class="t" style="left:243px;top:1564.51px;font-size:17.7px;color:#e6e6e6;font-weight:400;">8.50 MB</div>
<div class="a" style="left:324px;top:1562px;width:2px;height:21px;background:#ffffff;"></div>
<div class="a" style="left:2411px;top:1553px;width:39px;height:38px;background:#4f4f4f;box-sizing:border-box;border-top:1px solid #666;border-left:1px solid #666;"></div>
<svg class="a" style="left:2418px;top:1560px;" width="28" height="28" viewBox="0 0 28 28"><rect x="2" y="2" width="24" height="24" rx="3.5" fill="#c8c8c8"/><path d="M5 5 H23 M5 10 H23 M5 15 H23 M5 20 H23" stroke="#111" stroke-width="1.1" transform="translate(0,1.6)"/></svg>
<svg class="a" style="left:2454px;top:1557px;" width="28" height="28" viewBox="0 0 28 28"><rect x="2" y="2" width="24" height="24" rx="3.5" fill="#c8c8c8"/><rect x="4.5" y="4.5" width="19" height="15" rx="1" fill="#ffffff" stroke="#111" stroke-width="1"/><path d="M5 22.5 H23" stroke="#111" stroke-width="1.1"/></svg>
</body></html>
